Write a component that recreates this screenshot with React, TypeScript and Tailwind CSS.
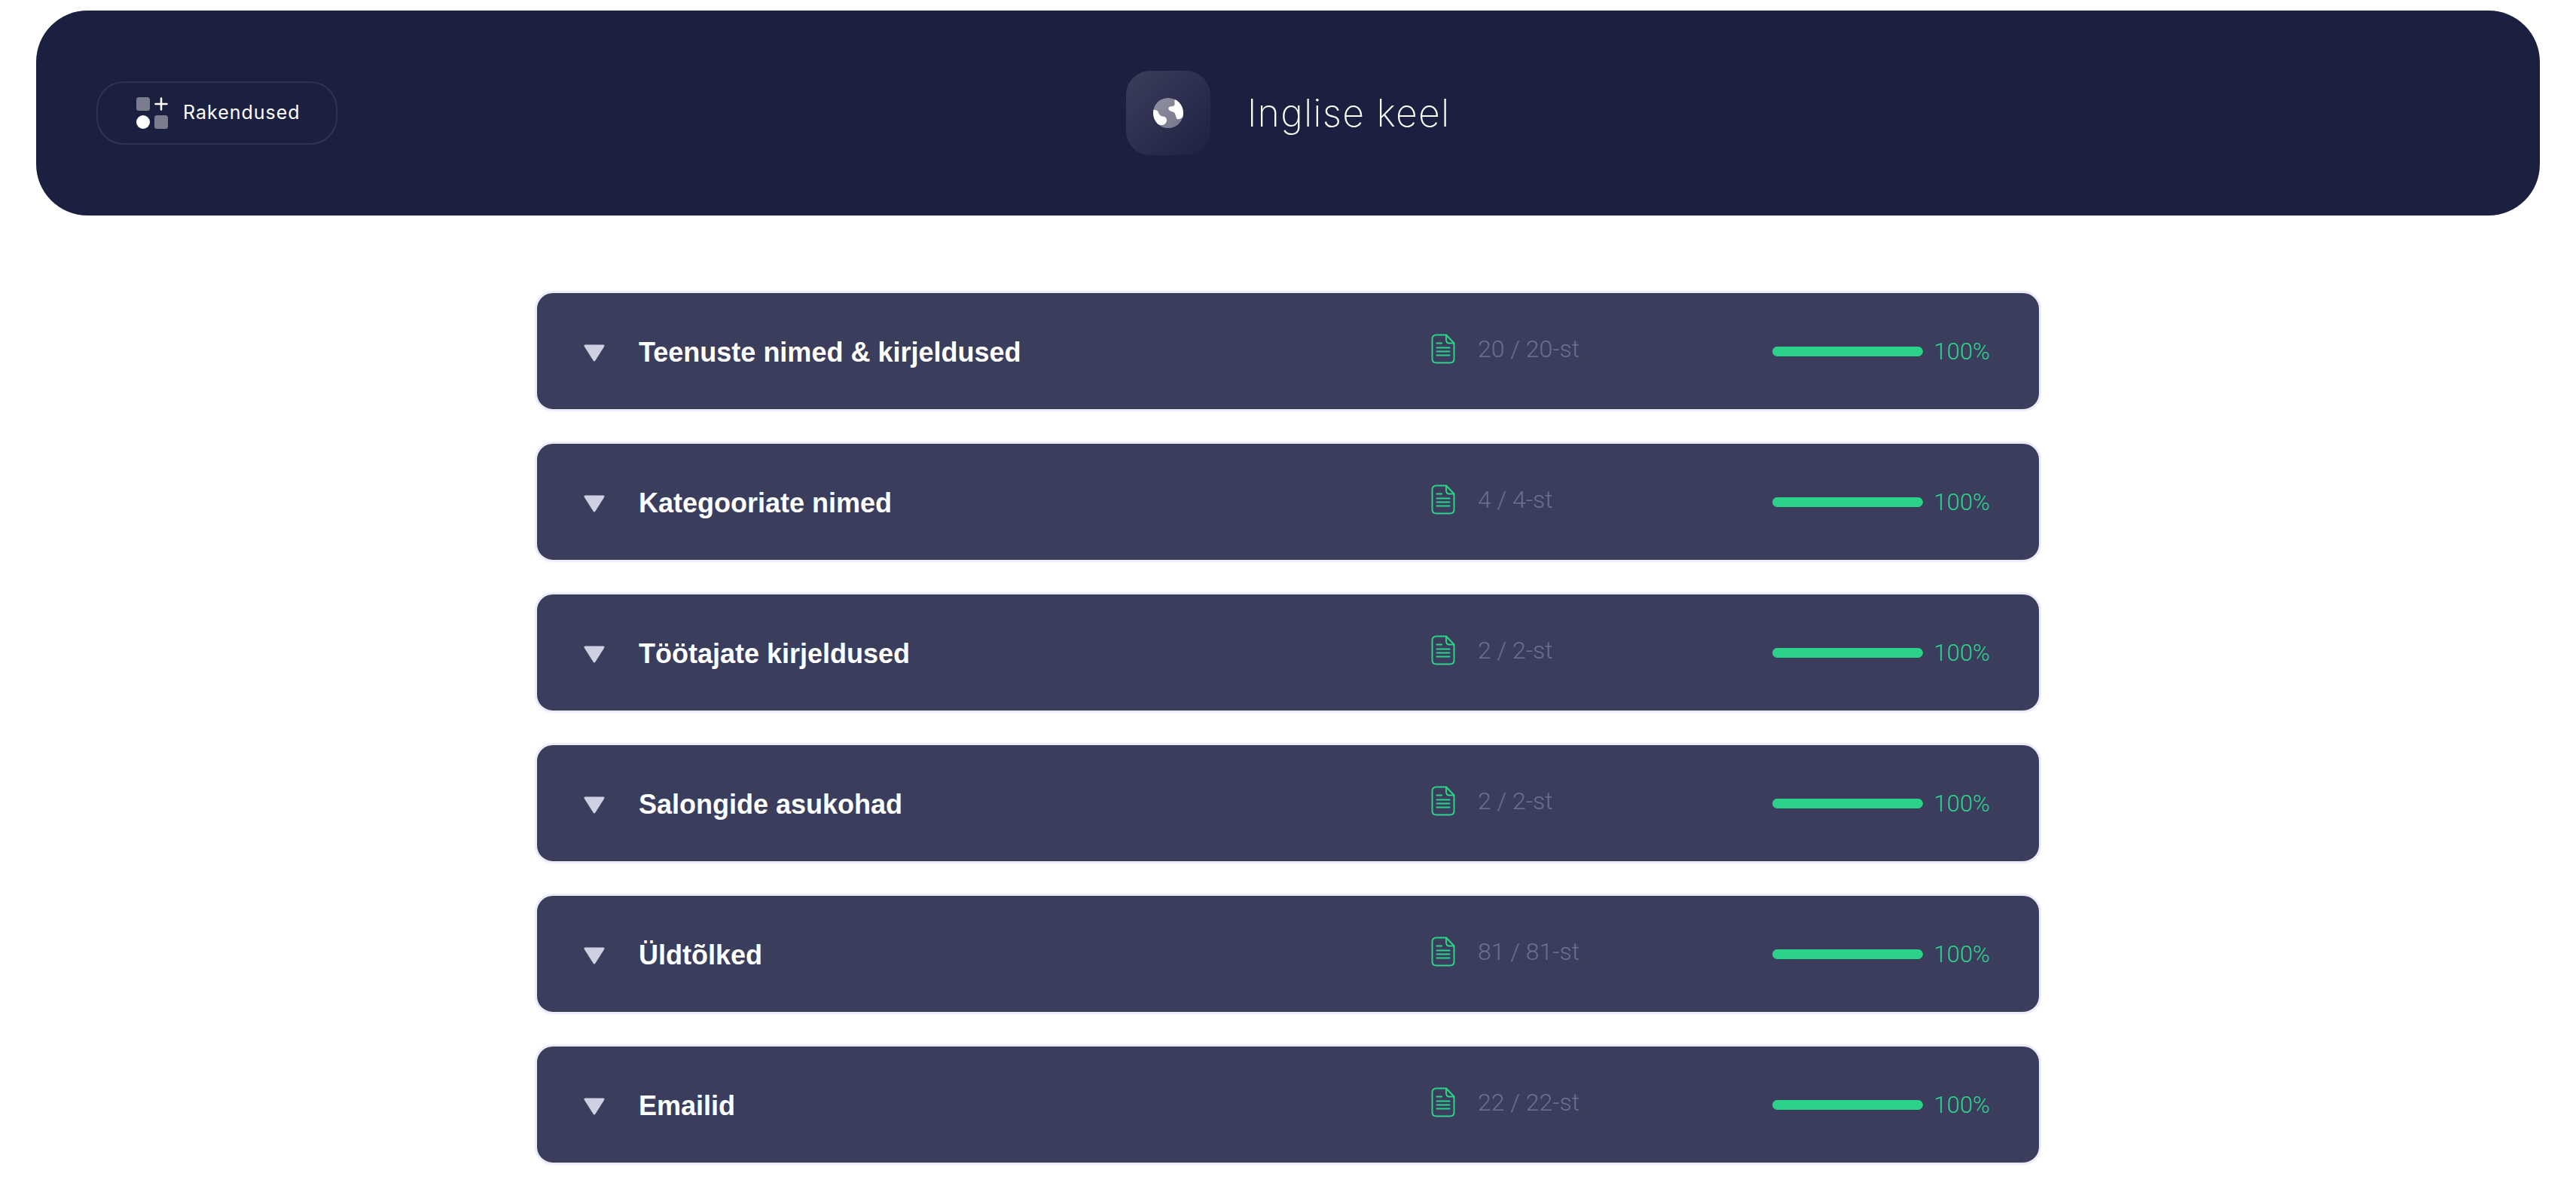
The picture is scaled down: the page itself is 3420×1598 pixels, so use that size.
import React from 'react';

const rows = [
  { title: 'Teenuste nimed & kirjeldused', count: '20 / 20-st' },
  { title: 'Kategooriate nimed', count: '4 / 4-st' },
  { title: 'Töötajate kirjeldused', count: '2 / 2-st' },
  { title: 'Salongide asukohad', count: '2 / 2-st' },
  { title: 'Üldtõlked', count: '81 / 81-st' },
  { title: 'Emailid', count: '22 / 22-st' },
];

function AppsIcon() {
  return (
    <svg width="42" height="42" viewBox="0 0 42 42" className="shrink-0">
      <rect x="0" y="0" width="18" height="18" rx="3.5" fill="#7b7d8e" />
      <rect x="24" y="24" width="18" height="18" rx="3.5" fill="#7b7d8e" />
      <circle cx="9" cy="33" r="9" fill="#fff" />
      <path d="M33 1.5v15M25.5 9h15" stroke="#fff" strokeWidth="2.6" strokeLinecap="round" />
    </svg>
  );
}

function GlobeIcon() {
  return (
    <svg width="40" height="40" viewBox="0 0 40 40">
      <defs>
        <clipPath id="globe-clip">
          <circle cx="20" cy="20" r="20" />
        </clipPath>
        <linearGradient id="globe-fill" x1="0" y1="0" x2="1" y2="1">
          <stop offset="0" stopColor="#9092a3" />
          <stop offset="1" stopColor="#75778a" />
        </linearGradient>
      </defs>
      <circle cx="20" cy="20" r="20" fill="url(#globe-fill)" />
      <g clipPath="url(#globe-clip)" fill="#fff">
        <path d="M29 2C27.5 4 29.5 8 28 10C26.5 11.5 21.5 10.5 20.5 13C19.5 16 22.5 17.5 26 18.5C30 19.5 29.5 24 31 27C32.5 29.5 36 28 42 24V2Z" />
        <path d="M-2 16C2 15.5 6 16 7 19C7.5 22 10 24.5 13.5 24.5C17 25 19 28 17.5 31.5C16.5 35 13.5 36 11 36L-2 34Z" />
      </g>
    </svg>
  );
}

function FileIcon() {
  return (
    <svg width="32" height="40" viewBox="0 0 32 40" fill="none" stroke="#2dd289" strokeWidth="2" className="shrink-0">
      <path d="M20 1.5H7C3.5 1.5 1.5 3.5 1.5 7V33C1.5 36.5 3.5 38.5 7 38.5H25C28.5 38.5 30.5 36.5 30.5 33V12.5Z" strokeLinejoin="round" />
      <path d="M20 1.5V8C20 10.8 21.7 12.5 24.5 12.5H30.5" strokeLinejoin="round" />
      <path d="M7.5 12.5H14M7.5 18.5H24.5M7.5 23.5H24.5M7.5 28.5H24.5" strokeLinecap="round" />
    </svg>
  );
}

function Caret() {
  return (
    <svg width="30" height="32" viewBox="0 0 30 32" className="shrink-0">
      <path d="M3 9H27L15 28Z" fill="#cfd0e2" stroke="#cfd0e2" strokeWidth="3" strokeLinejoin="round" />
    </svg>
  );
}

function Row({ title, count }: { title: string; count: string }) {
  return (
    <div className="flex h-[160px] items-center rounded-[24px] border-[3px] border-[#eceafd] bg-[#3b3d5c] pl-[61px] pr-[65px]">
      <Caret />
      <div className="ml-[44px] w-[1052px] shrink-0 pt-[3px] font-['Liberation_Sans',sans-serif] text-[36px] font-bold text-white">{title}</div>
      <div className="flex flex-1 -translate-y-[3px] items-center gap-[30px]">
        <FileIcon />
        <span className="font-['Roboto',sans-serif] text-[32px] font-light text-[#6a6f94]">{count}</span>
      </div>
      <div className="h-[13px] w-[200px] rounded-full bg-[#2dd289]" />
      <div className="ml-[14px] pt-[3px] font-['Roboto',sans-serif] text-[31px] font-light text-[#2dd289]">100%</div>
    </div>
  );
}

export default function App() {
  return (
    <div className="min-h-screen bg-white px-[48px] pt-[14px]">
      <header className="grid h-[272px] grid-cols-[1fr_auto_1fr] items-center rounded-[68px] bg-[#1c2040]">
        <button className="ml-[80px] flex h-[84px] w-[320px] items-center gap-[20px] rounded-[36px] border-2 border-[#2f3350] pl-[51px] font-['Inter',sans-serif] text-[25px] tracking-[1px] text-white">
          <AppsIcon />
          Rakendused
        </button>
        <div className="flex items-center gap-[49px]">
          <div className="flex h-[112px] w-[112px] items-center justify-center rounded-[32px] bg-gradient-to-br from-[#3b3e5b] to-[#1e2141]">
            <GlobeIcon />
          </div>
          <h1 className="font-['Inter',sans-serif] text-[50px] font-extralight tracking-[1.2px] text-white">Inglise keel</h1>
        </div>
        <div />
      </header>
      <main className="mx-auto mt-[100px] flex w-[2000px] flex-col gap-[40px]">
        {rows.map(row => (
          <Row key={row.title} title={row.title} count={row.count} />
        ))}
      </main>
    </div>
  );
}
